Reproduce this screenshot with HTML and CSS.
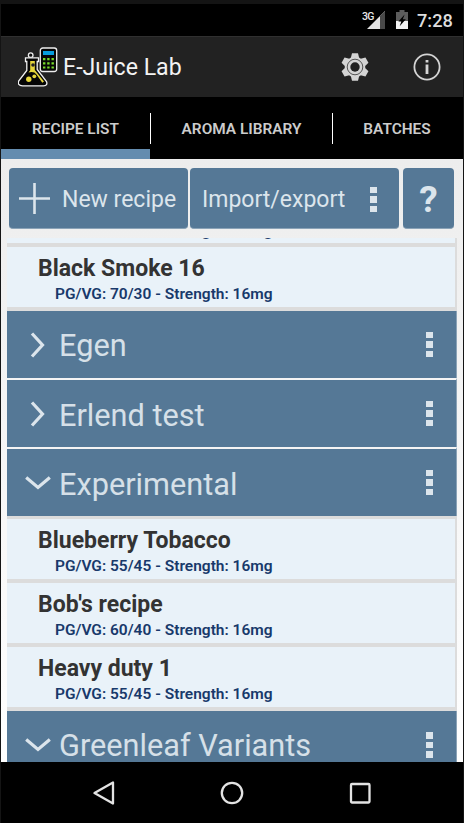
FILE: index.html
```html
<!DOCTYPE html>
<html lang="en">
<head>
<meta charset="utf-8">
<title>E-Juice Lab</title>
<link rel="stylesheet" href="styles.css">
</head>
<body>
<div class="screen">
  <div class="status">
    <svg class="signal" width="24" height="20" viewBox="0 0 24 20"><path d="M5 19L23 1V19Z" fill="#e4e4e4"/><path d="M18 6L23 1V19H18Z" fill="#484848"/><text x="0" y="9.5" class="net">3G</text></svg>
    <svg class="battery" width="12" height="19" viewBox="0 0 12 19"><path d="M0 2H3.5V0H8.5V2H12V11H0Z" fill="#5c5c5c"/><path d="M0 11H12V19H0Z" fill="#f2f2f2"/><path d="M8.6 4.5L2.4 11.5H5.3L3.7 16.3L9.8 9.2H6.8Z" fill="#000"/></svg>
    <span class="clock">7:28</span>
  </div>
  <header class="appbar">
    <svg class="logo" width="40" height="41" viewBox="0 0 40 41">
      <rect x="22.3" y="1" width="16.4" height="23.5" rx="2.5" fill="#060606" stroke="#eee" stroke-width="1.3"/>
      <rect x="25" y="4" width="11" height="4" fill="#079ddd"/>
      <path d="M25 11h2.4v2.2H25zM29.2 11h2.4v2.2h-2.4zM33.5 11h2.4v2.2h-2.4zM25 15.2h2.4v2.2H25zM29.2 15.2h2.4v2.2h-2.4zM33.5 15.2h2.4v2.2h-2.4zM25 19.4h2.4v2.2H25zM29.2 19.4h2.4v2.2h-2.4zM33.5 19.4h2.4v2.2h-2.4z" fill="#76d92b"/>
      <circle cx="12.7" cy="8.2" r="2.3" fill="#111" stroke="#eee" stroke-width="1.3"/>
      <path d="M7.5 10.8H20.5V14.5H19.2V22.5L28.5 34.5Q30 38.6 25.5 38.8H4.5Q-1 38.6 .8 33.8L8.8 23.5V14.5H7.5Z" fill="#050505" stroke="#f2f2f2" stroke-width="1.3"/>
      <path d="M12.2 14H16.8V23L26 34.5L24.3 35.7L18.5 27.5Q16 24 10.5 25.5L12.2 23.2Z" fill="#e6d63c"/>
      <circle cx="15" cy="18" r="1.8" fill="#222"/><circle cx="10.8" cy="32.3" r="2.7" fill="#e6d63c"/><circle cx="16.3" cy="29.3" r="1.9" fill="#e6d63c"/>
    </svg>
    <h1 class="title">E-Juice Lab</h1>
    <svg class="gear" width="28" height="30" viewBox="-14 -15 28 30"><g fill="#d4d4d4"><path id="tooth" d="M-4.2 -9L-3 -13.8H3L4.2 -9V9L3 13.8H-3L-4.2 9Z"/><use href="#tooth" transform="rotate(60)"/><use href="#tooth" transform="rotate(120)"/><circle r="10.3"/></g><circle r="7.8" fill="none" stroke="#333" stroke-width=".8"/><circle r="4.7" fill="#222"/></svg>
    <svg class="info" width="28" height="28" viewBox="0 0 28 28"><circle cx="14" cy="14" r="12.6" fill="none" stroke="#d4d4d4" stroke-width="1.8"/><path d="M12.6 7H15.4V9.5H12.6ZM12.6 11.5H15.4V21H12.6Z" fill="#d4d4d4"/></svg>
  </header>
  <nav class="tabs">
    <div class="tab tab-recipes"><span>RECIPE LIST</span></div>
    <div class="tab tab-aroma"><span>AROMA LIBRARY</span></div>
    <div class="tab tab-batches"><span>BATCHES</span></div>
  </nav>
  <main class="content">
    <div class="toolbar">
      <div class="btn btn-new"><svg width="31" height="31" viewBox="0 0 31 31"><path d="M15.5 0V31M0 15.5H31" stroke="#dce5ec" stroke-width="2.6"/></svg><span>New recipe</span></div>
      <div class="btn btn-port"><span>Import/export</span><i class="dots"></i></div>
      <div class="btn btn-help"><span>?</span></div>
    </div>
    <div class="list">
      <div class="recipe scrolled"><h3></h3><p>PG/VG: 70/30 - Strength: 16mg</p></div>
      <div class="recipe"><h3>Black Smoke 16</h3><p>PG/VG: 70/30 - Strength: 16mg</p></div>
      <div class="group"><svg class="arrow" viewBox="0 0 26 26"><path d="M7 1.5L17.5 13L7 24.5"/></svg><h2>Egen</h2><i class="dots"></i></div>
      <div class="group ruled"><svg class="arrow" viewBox="0 0 26 26"><path d="M7 1.5L17.5 13L7 24.5"/></svg><h2>Erlend test</h2><i class="dots"></i></div>
      <div class="group ruled"><svg class="arrow" viewBox="0 0 26 26"><path d="M1.2 7.5L13 17.5L24.8 7.5"/></svg><h2>Experimental</h2><i class="dots"></i></div>
      <div class="gap"></div>
      <div class="recipe"><h3>Blueberry Tobacco</h3><p>PG/VG: 55/45 - Strength: 16mg</p></div>
      <div class="recipe"><h3>Bob's recipe</h3><p>PG/VG: 60/40 - Strength: 16mg</p></div>
      <div class="recipe"><h3>Heavy duty 1</h3><p>PG/VG: 55/45 - Strength: 16mg</p></div>
      <div class="group"><svg class="arrow" viewBox="0 0 26 26"><path d="M1.2 7.5L13 17.5L24.8 7.5"/></svg><h2>Greenleaf Variants</h2><i class="dots"></i></div>
    </div>
  </main>
  <footer class="navbar">
    <svg width="24" height="26" viewBox="0 0 24 26"><path d="M21 2.5V23.5L2.5 13Z"/></svg>
    <svg width="24" height="26" viewBox="0 0 24 26"><circle cx="12" cy="13" r="10.2"/></svg>
    <svg width="24" height="26" viewBox="0 0 24 26"><rect x="3" y="4" width="18.5" height="18.5" rx="1"/></svg>
  </footer>
</div>
</body>
</html>
```
FILE: styles.css
```css
* { box-sizing: border-box; }
body { margin: 0; background: #141414; font-family: Roboto, sans-serif; }
h1, h2, h3, p { margin: 0; white-space: nowrap; }
svg { display: block; flex: none; }
span { white-space: nowrap; }
.screen { width: 462px; height: 823px; margin-left: 1px; padding-top: 4px; display: flex; flex-direction: column; overflow: hidden; }
.status { height: 32px; background: #000; display: flex; align-items: flex-start; flex: none; }
.signal { margin: 6px 0 0 361px; }
.net { font: 500 10.5px Roboto, sans-serif; fill: #e8e8e8; letter-spacing: -.6px; }
.battery { margin: 6px 0 0 10px; }
.clock { margin: 5px 0 0 9px; font-size: 18.2px; line-height: 23px; font-weight: 500; color: #dedede; }
.appbar { height: 61px; background: #222; border-top: 1px solid #303030; display: flex; align-items: flex-start; flex: none; }
.logo { margin: 10px 0 0 17px; }
.title { margin: 17px 0 0 5px; width: 278px; font-size: 23.1px; line-height: 28px; font-weight: 400; color: #f3f3f3; }
.gear { margin: 15px 0 0 0; }
.info { margin: 16px 0 0 44px; }
.tabs { height: 62px; background: #000; display: flex; flex: none; }
.tab { display: flex; justify-content: center; padding-top: 20px; font-size: 15.4px; line-height: 24px; font-weight: 600; color: #ccc; background: linear-gradient(#fff, #fff) right 16px / 1px 31px no-repeat; }
.tab-recipes { width: 150px; padding-right: 1px; background: linear-gradient(#fff, #fff) right 16px / 1px 31px no-repeat, linear-gradient(#648caf, #648caf) left bottom / 149px 10px no-repeat; }
.tab-aroma { width: 182px; padding-right: 1px; }
.tab-batches { width: 130px; padding-right: 2px; background: none; }
.content { flex: none; height: 603px; background: linear-gradient(#ededed, #fff); display: flex; flex-direction: column; }
.toolbar { height: 79px; padding: 9px 9px 0 8px; display: flex; align-items: flex-start; flex: none; }
.btn { height: 61px; background: #557896; border-radius: 4px; color: #dce5ec; font-size: 23px; font-weight: 400; display: flex; align-items: center; flex: none; border-bottom: 1px solid #8ba3b7; }
.btn span { line-height: 28px; padding-top: 3px; }
.btn-new { width: 179px; padding-left: 10px; gap: 12px; margin-right: 2px; }
.btn-port { width: 209px; padding: 0 22px 0 12px; justify-content: space-between; margin-right: 4px; }
.btn-port .dots { margin-top: 3px; }
.btn-help { width: 51px; justify-content: center; font-size: 37px; font-weight: 700; }
.btn-help span { padding-top: 3px; }
.dots { display: block; width: 7px; height: 26px; flex: none; background: linear-gradient(#dce5ec 0 6.5px, transparent 6.5px 9.5px, #dce5ec 9.5px 16px, transparent 16px 19px, #dce5ec 19px 25.5px, transparent 25.5px); }
.list { margin: 0 6px; height: 524px; overflow: hidden; flex: none; }
.recipe { height: 64px; background: #e9f2f9; border-bottom: 4px solid #dcdcdc; border-right: 2px solid #dcdcdc; padding: 8px 0 0 31px; }
.scrolled { margin-top: -55px; }
.scrolled p { padding-top: 1px; }
.recipe h3 { height: 28px; font-size: 23px; line-height: 28px; font-weight: 700; color: #333; }
.recipe p { padding-left: 17px; font-size: 15.5px; line-height: 23px; font-weight: 600; color: #18396b; }
.group { height: 67px; background: #557896; display: flex; align-items: center; padding: 0 23px 0 18px; border-right: 1px solid #8ba3b7; }
.ruled { height: 69px; border-top: 2px solid #f4f4f4; }
.arrow { width: 26px; height: 26px; fill: none; stroke: #dce5ec; stroke-width: 3.2; }
.group h2 { margin-left: 8px; padding-top: 3px; flex: 1; font-size: 30.7px; line-height: 36px; font-weight: 400; color: #d6e0e8; }
.ruled h2 { padding-top: 5px; }
.gap { height: 3px; background: #dcdcdc; }
.navbar { height: 61px; background: #000; display: flex; justify-content: center; gap: 104px; padding-top: 18px; flex: none; }
.navbar svg { fill: none; stroke: #e3e3e3; stroke-width: 2.3; stroke-linejoin: round; }
```
